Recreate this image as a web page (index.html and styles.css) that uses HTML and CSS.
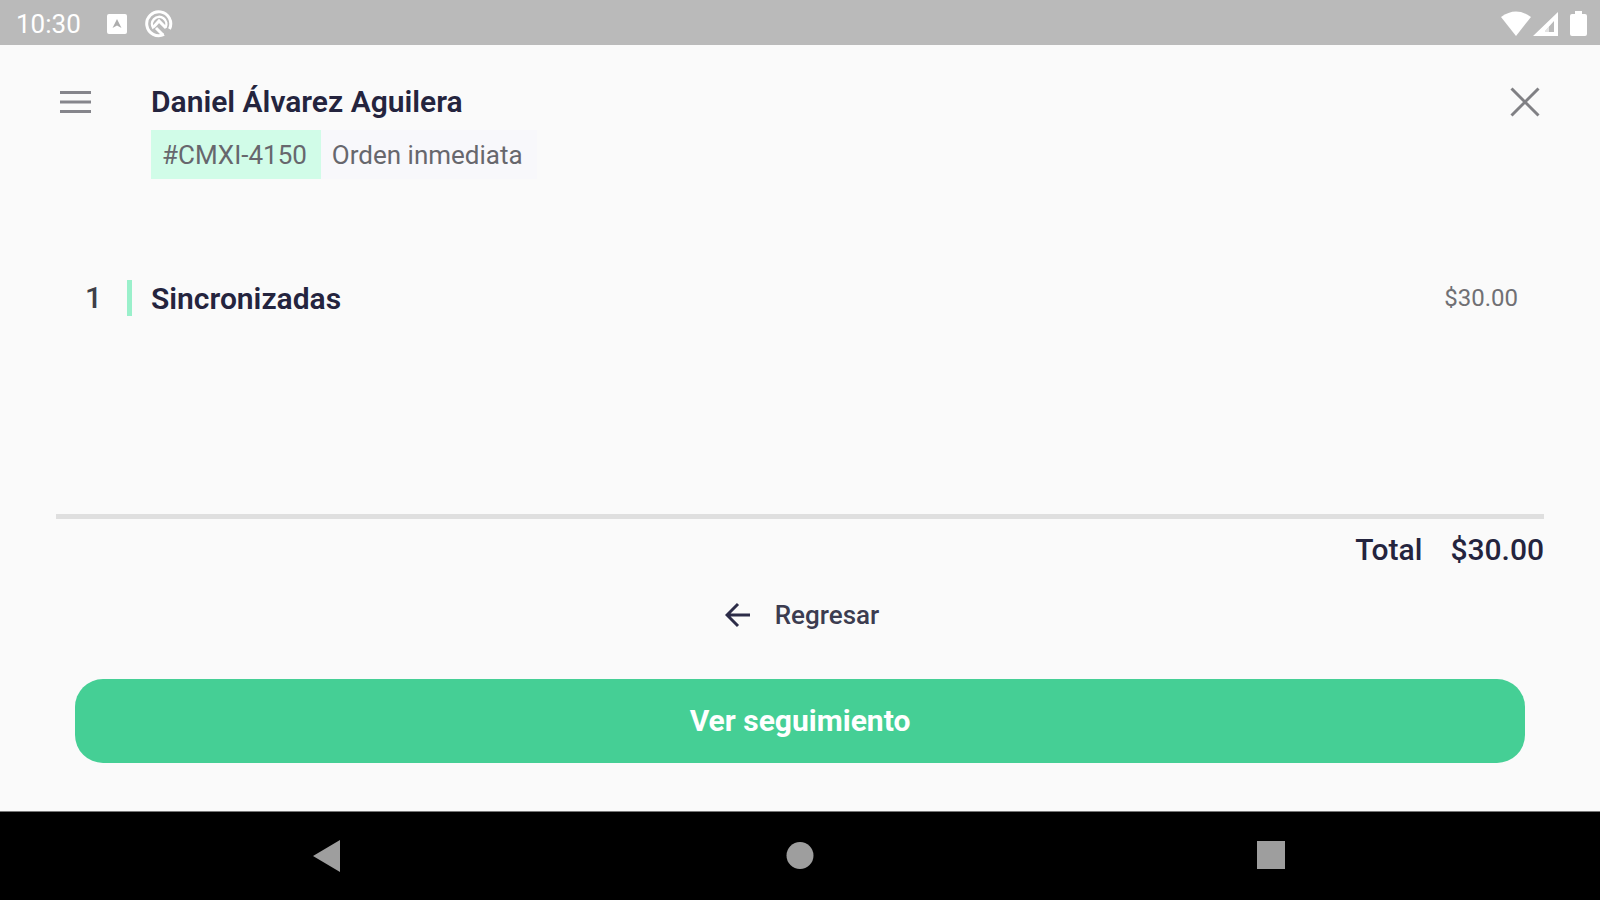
FILE: index.html
```html
<!DOCTYPE html>
<html lang="es">
<head>
    <meta charset="UTF-8">
    <meta name="viewport" content="width=device-width, initial-scale=1.0">
    <title>Orden #CMXI-4150</title>
    <link rel="stylesheet" href="styles.css">
</head>
<body>
    <div class="statusbar">
        <span class="clock">10:30</span>
        <svg class="notif" width="20" height="22" viewBox="0 0 20 22">
            <rect x="0" y="1" width="20" height="20" rx="2" fill="#fff"/>
            <path d="M5.500 15 L10 6 L14.500 15 L10 12.500 Z" fill="#adadad"/>
        </svg>
        <svg class="notif" width="28" height="28" viewBox="0 0 28 28" fill="none" stroke="#fff">
            <path d="M19 24.500 A12 12 0 1 1 24.500 19" stroke-width="3"/>
            <path d="M8.500 18.500 A7.200 7.200 0 1 1 20.500 17.500" stroke-width="2.500"/>
            <path d="M8.500 17 L14 11 L21 18" stroke-width="3"/>
            <path d="M11 18 L18 25" stroke-width="3"/>
        </svg>
        <div class="system">
            <svg width="30" height="26" viewBox="0 0 30 26">
                <path d="M0 6 Q15 -5 30 6 L15 25 Z" fill="#fff"/>
            </svg>
            <svg width="25" height="26" viewBox="0 0 25 26">
                <path d="M25 1 V25 H0 Z M21 10 L12 20 V21 H21 Z" fill="#fff" fill-rule="evenodd"/>
                <path d="M12 20 L16 15.500 V21 H12 Z" fill="#fff" opacity="0.6"/>
            </svg>
            <svg class="battery" width="17" height="26" viewBox="0 0 17 26">
                <path d="M5 0 H12 V3 H15 Q17 3 17 5 V23 Q17 25 15 25 H2 Q0 25 0 23 V5 Q0 3 2 3 H5 Z" fill="#fff"/>
            </svg>
        </div>
    </div>

    <main class="order">
        <header class="header">
            <button class="icon-btn" type="button" aria-label="Menú">
                <svg width="32" height="24" viewBox="0 0 32 24" stroke="#85858b" stroke-width="3">
                    <path d="M0 2.500 H31 M0 12 H31 M0 21.500 H31"/>
                </svg>
            </button>
            <div class="client">
                <h1 class="name">Daniel Álvarez Aguilera</h1>
                <div class="tags">
                    <span class="tag tag-id">#CMXI-4150</span>
                    <span class="tag">Orden inmediata</span>
                </div>
            </div>
            <button class="icon-btn close" type="button" aria-label="Cerrar">
                <svg width="30" height="30" viewBox="0 0 30 30" stroke="#808084" stroke-width="3">
                    <path d="M1.500 1.500 L28.500 28.500 M28.500 1.500 L1.500 28.500"/>
                </svg>
            </button>
        </header>

        <ul class="items">
            <li class="item">
                <span class="qty">1</span>
                <span class="product">Sincronizadas</span>
                <span class="price">$30.00</span>
            </li>
        </ul>

        <div class="total">
            <span>Total</span>
            <span>$30.00</span>
        </div>

        <button class="back" type="button">
            <svg width="26" height="26" viewBox="0 0 26 26" fill="none" stroke="#2c2c48" stroke-width="3">
                <path d="M25 13 H2 M13 2 L2 13 L13 24"/>
            </svg>
            Regresar
        </button>

        <button class="track" type="button">Ver seguimiento</button>
    </main>

    <nav class="navbar">
        <button class="nav-btn" type="button" aria-label="Atrás">
            <svg width="34" height="34" viewBox="0 0 34 34"><path d="M3 17 L30 1 V33 Z" fill="#9e9e9e"/></svg>
        </button>
        <button class="nav-btn" type="button" aria-label="Inicio">
            <svg width="34" height="34" viewBox="0 0 34 34"><circle cx="17" cy="16.500" r="13.500" fill="#9e9e9e"/></svg>
        </button>
        <button class="nav-btn" type="button" aria-label="Recientes">
            <svg width="34" height="34" viewBox="0 0 34 34"><rect x="1" y="2" width="28" height="28" fill="#9e9e9e"/></svg>
        </button>
    </nav>
</body>
</html>
```

FILE: styles.css
```css
* {
    box-sizing: border-box;
}

body {
    margin: 0;
    min-height: 100vh;
    display: flex;
    flex-direction: column;
    background-color: #fafafa;
    color: #24243e;
    font-family: Roboto, "Liberation Sans", sans-serif;
    font-size: 30px;
    line-height: 36px;
}

button {
    padding: 0;
    border: none;
    background: none;
    font: inherit;
    color: inherit;
    cursor: pointer;
}

svg {
    display: block;
}

/* Status bar */
.statusbar {
    display: flex;
    align-items: center;
    height: 45px;
    padding: 2px 13px 0 16px;
    background-color: #bababa;
    color: #fff;
}

.clock {
    font-size: 26px;
    margin-right: 8px;
}

.notif {
    margin-left: 18px;
}

.system {
    display: flex;
    gap: 2px;
    margin-left: auto;
}

.battery {
    margin-left: 10px;
}

/* Order */
.order {
    flex: 1;
    display: flex;
    flex-direction: column;
    padding: 39px 56px 48px;
}

.header {
    display: flex;
    align-items: flex-start;
}

.icon-btn {
    display: flex;
    align-items: center;
    width: 95px;
    height: 36px;
    padding-left: 4px;
}

.close {
    justify-content: flex-end;
    padding: 0 4px 0 0;
    margin-left: auto;
}

.name {
    margin: 0;
    font-size: 30px;
    font-weight: 600;
}

.tags {
    display: flex;
    margin-top: 10px;
}

.tag {
    padding: 7px 14px 6px 11px;
    background-color: #f8f8fb;
    color: #67676d;
    font-size: 26px;
}

.tag-id {
    background-color: #d1fce8;
}

.items {
    flex: 1;
    margin: 0;
    padding: 100px 26px 0 0;
    list-style: none;
}

.item {
    display: flex;
    align-items: center;
    font-weight: 600;
}

.qty {
    width: 76px;
    padding-left: 29px;
    border-right: 5px solid #9af0cb;
    color: #3f3f48;
    font-weight: 500;
}

.product {
    flex: 1;
    padding: 2px 0 0 19px;
}

.price {
    color: #707074;
    font-size: 24px;
    font-weight: 400;
}

.total {
    display: flex;
    justify-content: flex-end;
    gap: 28px;
    padding-top: 13px;
    border-top: 5px solid #dfdfdf;
    font-weight: 500;
}

.back {
    display: flex;
    align-items: center;
    align-self: center;
    gap: 24px;
    margin-top: 29px;
    padding-left: 4px;
    color: #3c3c50;
    font-size: 26px;
    font-weight: 500;
}

.track {
    height: 84px;
    margin: 46px 19px 0;
    border-radius: 28px;
    background-color: #45cf95;
    color: #fff;
    font-weight: 700;
}

/* Android navigation */
.navbar {
    display: flex;
    height: 89px;
    padding: 0 91px;
    border-top: 1px solid #777;
    background-color: #000;
}

.nav-btn {
    flex: 1;
    display: flex;
    align-items: center;
    justify-content: center;
}
```
